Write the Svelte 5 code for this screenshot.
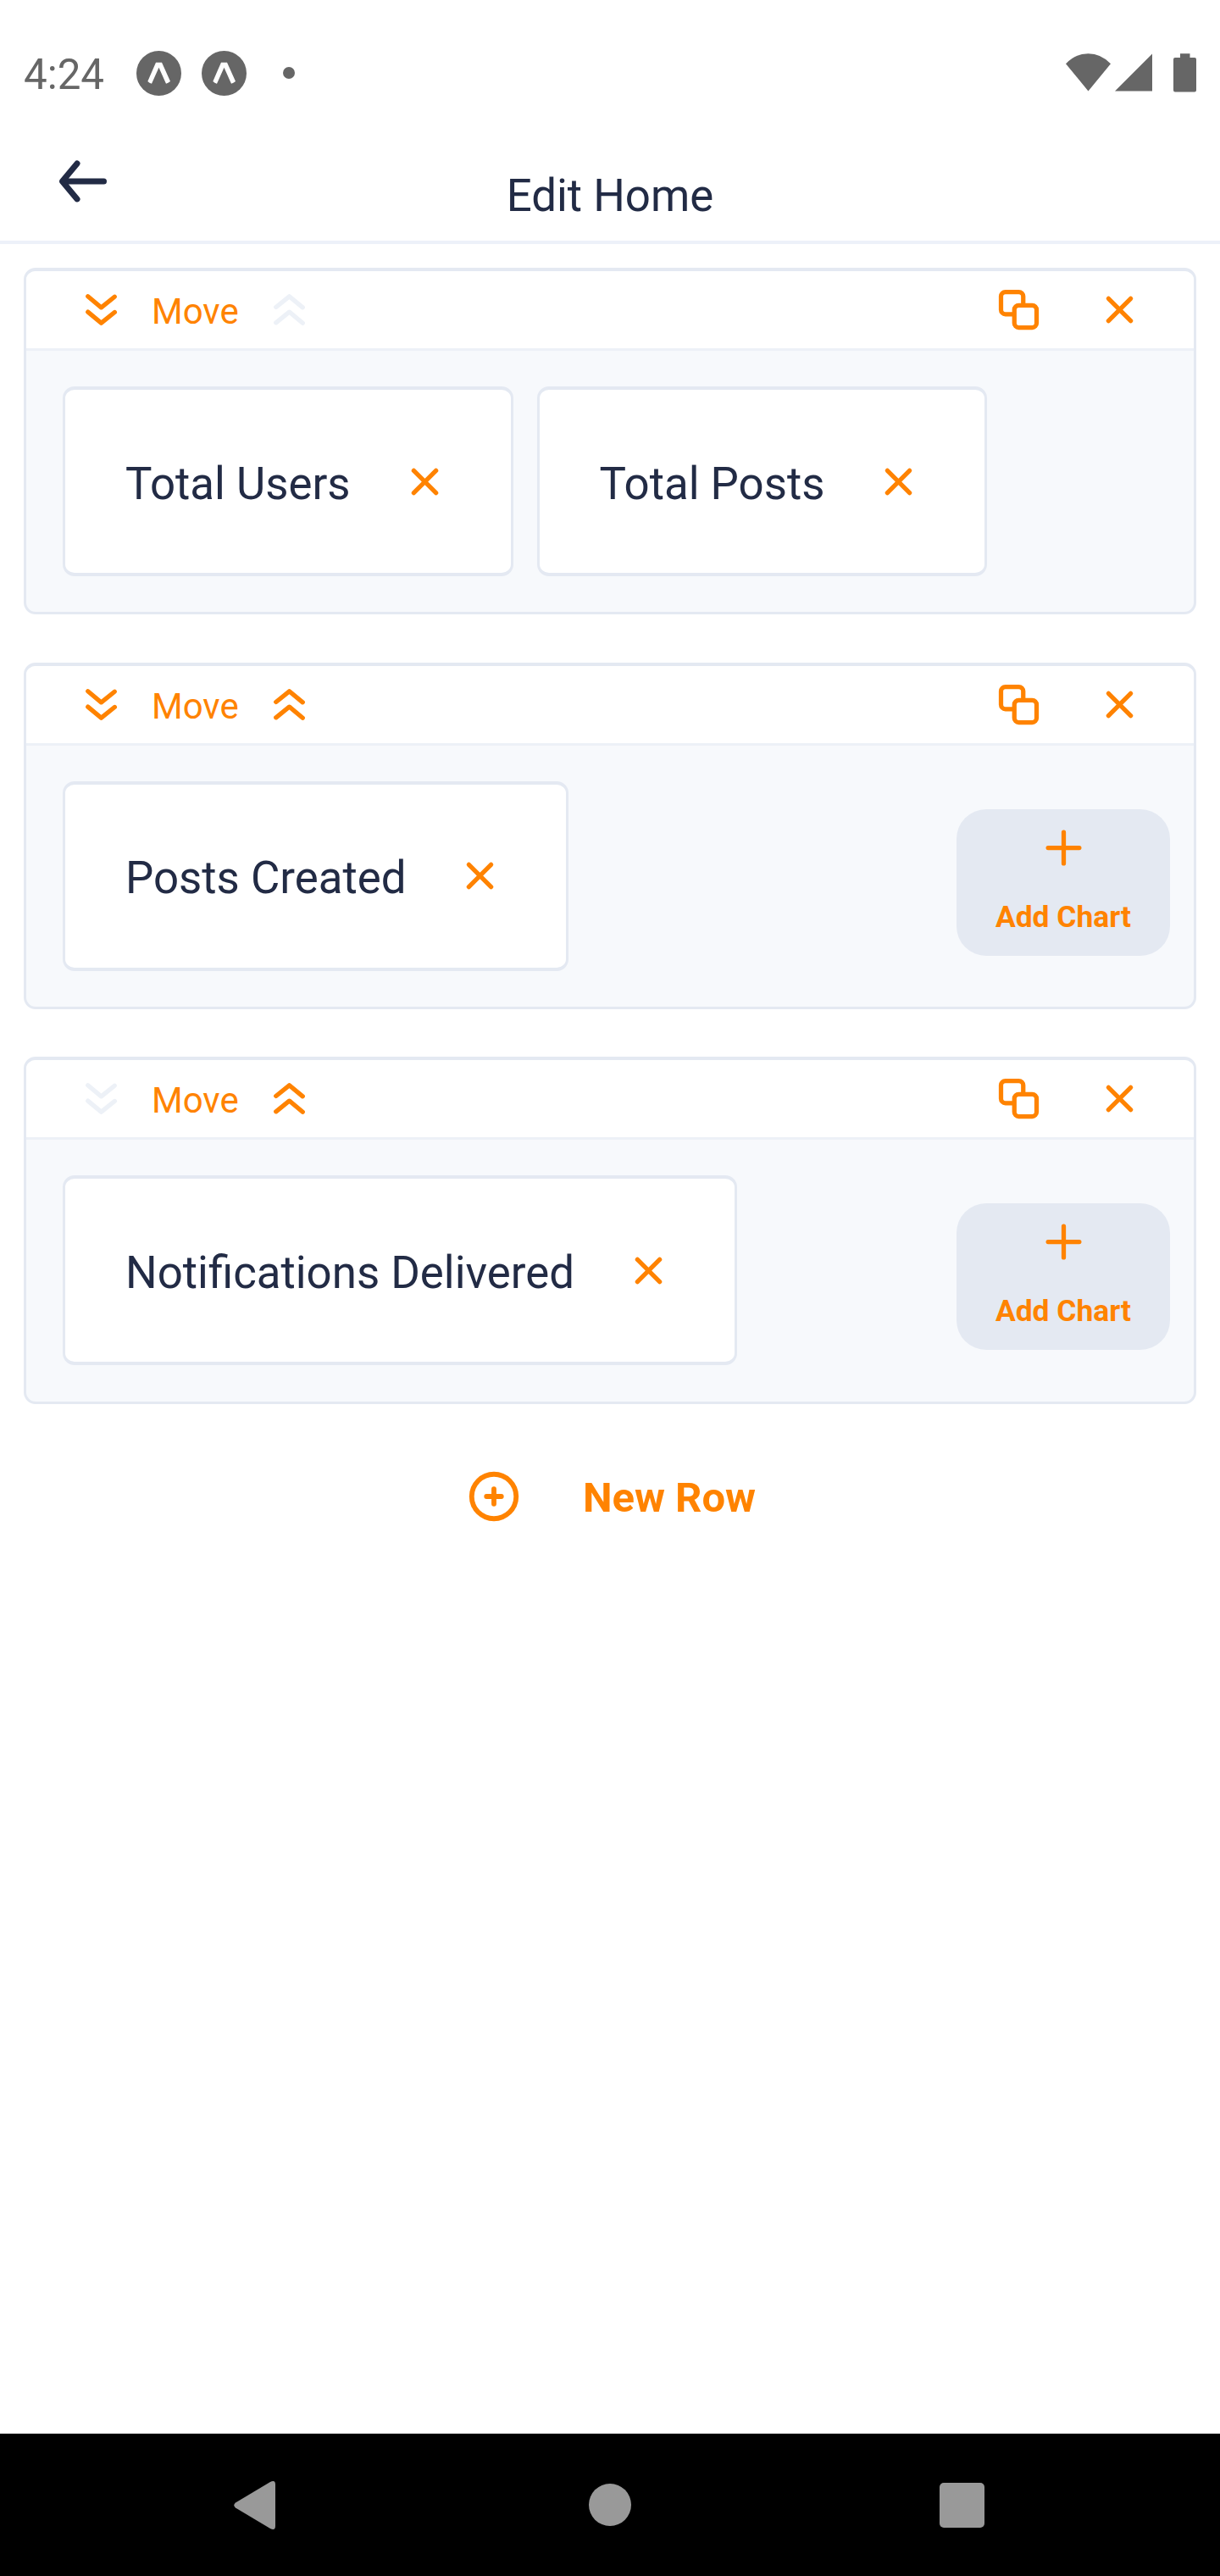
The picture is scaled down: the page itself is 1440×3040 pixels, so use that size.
<script>
  const icons = {
    down: 'M17.37 12.39L12 16.71l-5.36-4.48a1 1 0 1 0-1.28 1.54l6 5a1 1 0 0 0 1.27 0l6-4.83a1 1 0 1 0-1.26-1.55zM11.36 11.77a1 1 0 0 0 1.27 0l6-4.83a1 1 0 0 0 .15-1.4 1 1 0 0 0-1.41-.15L12 9.71 6.64 5.23a1 1 0 0 0-1.28 1.54z',
    up: 'M6.63 11.61L12 7.29l5.37 4.48A1 1 0 0 0 18 12a1 1 0 0 0 .77-.36 1 1 0 0 0-.13-1.41l-6-5a1 1 0 0 0-1.27 0l-6 4.83a1 1 0 0 0-.15 1.41 1 1 0 0 0 1.41.14zM12.64 12.23a1 1 0 0 0-1.27 0l-6 4.83a1 1 0 0 0-.15 1.41 1 1 0 0 0 1.41.15L12 14.29l5.37 4.48A1 1 0 0 0 18 19a1 1 0 0 0 .77-.36 1 1 0 0 0-.13-1.41z',
    close: 'M13.41 12l4.3-4.29a1 1 0 1 0-1.42-1.42L12 10.59l-4.29-4.3a1 1 0 0 0-1.42 1.42l4.3 4.29-4.3 4.29a1 1 0 0 0 0 1.42 1 1 0 0 0 1.42 0l4.29-4.3 4.29 4.3a1 1 0 0 0 1.42 0 1 1 0 0 0 0-1.42z',
    plus: 'M19 11h-6V5a1 1 0 0 0-2 0v6H5a1 1 0 0 0 0 2h6v6a1 1 0 0 0 2 0v-6h6a1 1 0 0 0 0-2z',
    plusCircle: 'M12 2a10 10 0 1 0 10 10A10 10 0 0 0 12 2zm0 18a8 8 0 1 1 8-8 8 8 0 0 1-8 8zM15 11h-2V9a1 1 0 0 0-2 0v2H9a1 1 0 0 0 0 2h2v2a1 1 0 0 0 2 0v-2h2a1 1 0 0 0 0-2z',
    back: 'M19 11H7.14l3.63-4.36a1 1 0 1 0-1.54-1.28l-5 6a1.19 1.19 0 0 0-.09.15c0 .05 0 .08-.07.13A1 1 0 0 0 4 12a1 1 0 0 0 .07.36c0 .05 0 .08.07.13a1.19 1.19 0 0 0 .09.15l5 6A1 1 0 0 0 10 19a1 1 0 0 0 .64-.23 1 1 0 0 0 .13-1.41L7.14 13H19a1 1 0 0 0 0-2z'
  };

  const rows = [
    { charts: ['Total Users', 'Total Posts'], canAdd: false },
    { charts: ['Posts Created'], canAdd: true },
    { charts: ['Notifications Delivered'], canAdd: true }
  ];
</script>

{#snippet icon(name, extra = '')}
  <svg class="icon {extra}" viewBox="0 0 24 24" aria-hidden="true"><path d={icons[name]} /></svg>
{/snippet}

{#snippet appBadge()}
  <svg class="app-badge" viewBox="0 0 159 159" aria-hidden="true">
    <circle cx="79.5" cy="79.5" r="79.5" fill="#666" />
    <path d="M69 41H90L120 108Q112 115 105 116L79.5 59L54 116Q46 114 40 108Z" fill="#fff" />
  </svg>
{/snippet}

<div class="screen">
  <div class="status">
    <span class="time">4:24</span>
    {@render appBadge()}
    {@render appBadge()}
    <span class="dot"></span>
    <svg class="signals" viewBox="0 0 154 46" aria-hidden="true">
      <path d="M0 12.2Q11.500 0.200 26.500 0.200T53 12.200L26.500 44.500ZM58 44.500L102 0.500V44.500Z" />
      <path d="M135 0.300h11.500V5H152a2 2 0 0 1 2 2V43.500a2 2 0 0 1-2 2H129a2 2 0 0 1-2-2V7a2 2 0 0 1 2-2h6Z" />
    </svg>
  </div>

  <header>
    <button class="back" aria-label="Back">{@render icon('back', 'i84')}</button>
    <h1>Edit Home</h1>
    <span></span>
  </header>

  <main>
    {#each rows as row, i}
      <section>
        <div class="bar">
          <button aria-label="Move down" class:off={i === rows.length - 1}>{@render icon('down')}</button>
          <span class="move">Move</span>
          <button aria-label="Move up" class:off={i === 0}>{@render icon('up')}</button>
          <button class="copy" aria-label="Duplicate row">
            <svg class="icon outline" viewBox="0 0 24 24" aria-hidden="true">
              <path d="M10 14H6a2 2 0 0 1-2-2V6a2 2 0 0 1 2-2h6a2 2 0 0 1 2 2v4" />
              <rect x="10" y="10" width="10" height="10" rx="2" />
            </svg>
          </button>
          <button aria-label="Remove row">{@render icon('close')}</button>
        </div>
        <div class="content">
          {#each row.charts as chart}
            <div class="chip">
              <span>{chart}</span>
              <button aria-label="Remove {chart}">{@render icon('close')}</button>
            </div>
          {/each}
          {#if row.canAdd}
            <button class="add">
              {@render icon('plus')}
              <span>Add Chart</span>
            </button>
          {/if}
        </div>
      </section>
    {/each}
    <button class="new-row">
      {@render icon('plusCircle', 'i70')}
      <span>New Row</span>
    </button>
  </main>

  <nav>
    <svg class="nav-back" viewBox="0 0 49 57" aria-hidden="true">
      <path d="M2 25.500L43 1Q49-2 49 4V53Q49 59 43 56L2 31.500Q-1.500 28.500 2 25.500Z" />
    </svg>
    <span class="nav-home"></span>
    <span class="nav-recent"></span>
  </nav>
</div>

<style>
  :global(body) { margin: 0; background: #fff; }
  * { box-sizing: border-box; }
  .screen {
    width: 1440px; height: 3040px; display: flex; flex-direction: column;
    background: #fff; color: #222b45; font-family: Roboto, sans-serif; overflow: hidden;
  }
  button {
    appearance: none; border: 0; margin: 0; padding: 0; background: none;
    display: flex; align-items: center; color: #ff8300; font: inherit; flex: none;
  }
  .icon { width: 63px; height: 63px; fill: currentColor; display: block; flex: none; }
  .i84 { width: 84px; height: 84px; }
  .i70 { width: 70px; height: 70px; }
  .outline { fill: none; stroke: currentColor; stroke-width: 2; }

  .status { height: 172px; display: flex; align-items: center; padding: 0 28px; flex: none; }
  .time { width: 133px; font-size: 49.3px; line-height: 58px; color: #666; padding-top: 4.5px; }
  .app-badge { width: 53px; height: 53px; margin-right: 24px; }
  .dot { width: 14px; height: 14px; border-radius: 50%; background: #666; margin-left: 19px; }
  .signals { width: 154px; height: 46px; fill: #666; margin-left: auto; }

  header {
    height: 116px; flex: none; display: grid; grid-template-columns: 1fr auto 1fr;
    border-bottom: 4px solid #edf1f9;
  }
  .back { height: 84px; padding-left: 56px; color: #222b45; }
  h1 { margin: 0; padding-top: 28px; font-size: 52.8px; font-weight: 400; line-height: 62px; }

  main { flex: 1; display: flex; flex-direction: column; padding: 28px; gap: 56.2px; }
  section {
    height: 409.4px; border: 3px solid #e4e9f2; border-top-width: 4px;
    border-radius: 14px; overflow: hidden; background: #f7f9fc; flex: none;
    display: flex; flex-direction: column;
  }
  .bar {
    height: 94px; flex: none; display: flex; align-items: center; background: #fff;
    border-bottom: 3px solid #edf1f7; padding: 0 56px 0 57px;
  }
  .off { color: #edf1f7; }
  .move { font-size: 42px; line-height: 50px; color: #ff8300; width: 159px; padding: 5px 0 0 28px; }
  .copy { margin: 0 56px 0 auto; }
  .content { flex: 1; display: flex; align-items: flex-start; padding: 42px 28px 0 43px; gap: 28px; }
  .chip {
    height: 224px; display: flex; align-items: center; gap: 56px; padding: 0 70px 0 71px;
    border: 3px solid #e4e9f2; border-top-width: 4px; border-bottom-width: 4px;
    border-radius: 14px; background: #fff; font-size: 52.8px; white-space: nowrap;
  }
  .chip span { padding-top: 5px; }
  .add {
    margin: 33px 0 0 auto; width: 252px; height: 173px; border-radius: 35px;
    background: #e4e9f2; flex-direction: column; padding-top: 14px;
    font-size: 35.4px; font-weight: 700; line-height: 41px;
  }
  .add span { margin-top: 30px; }
  .new-row { align-self: center; margin-top: 18.5px; font-size: 49px; font-weight: 700; line-height: 58px; }
  .new-row span { padding: 4.5px 0 0 70px; }

  nav {
    height: 168px; flex: none; background: #000; display: grid; align-items: center;
    grid-template-columns: 1fr auto 1fr; padding: 0 276px;
  }
  .nav-back { width: 49px; height: 57px; fill: #999; }
  .nav-home { width: 50px; height: 50px; border-radius: 50%; background: #999; }
  .nav-recent { width: 53px; height: 53px; border-radius: 5px; background: #999; justify-self: end; margin-right: 2px; }
</style>
